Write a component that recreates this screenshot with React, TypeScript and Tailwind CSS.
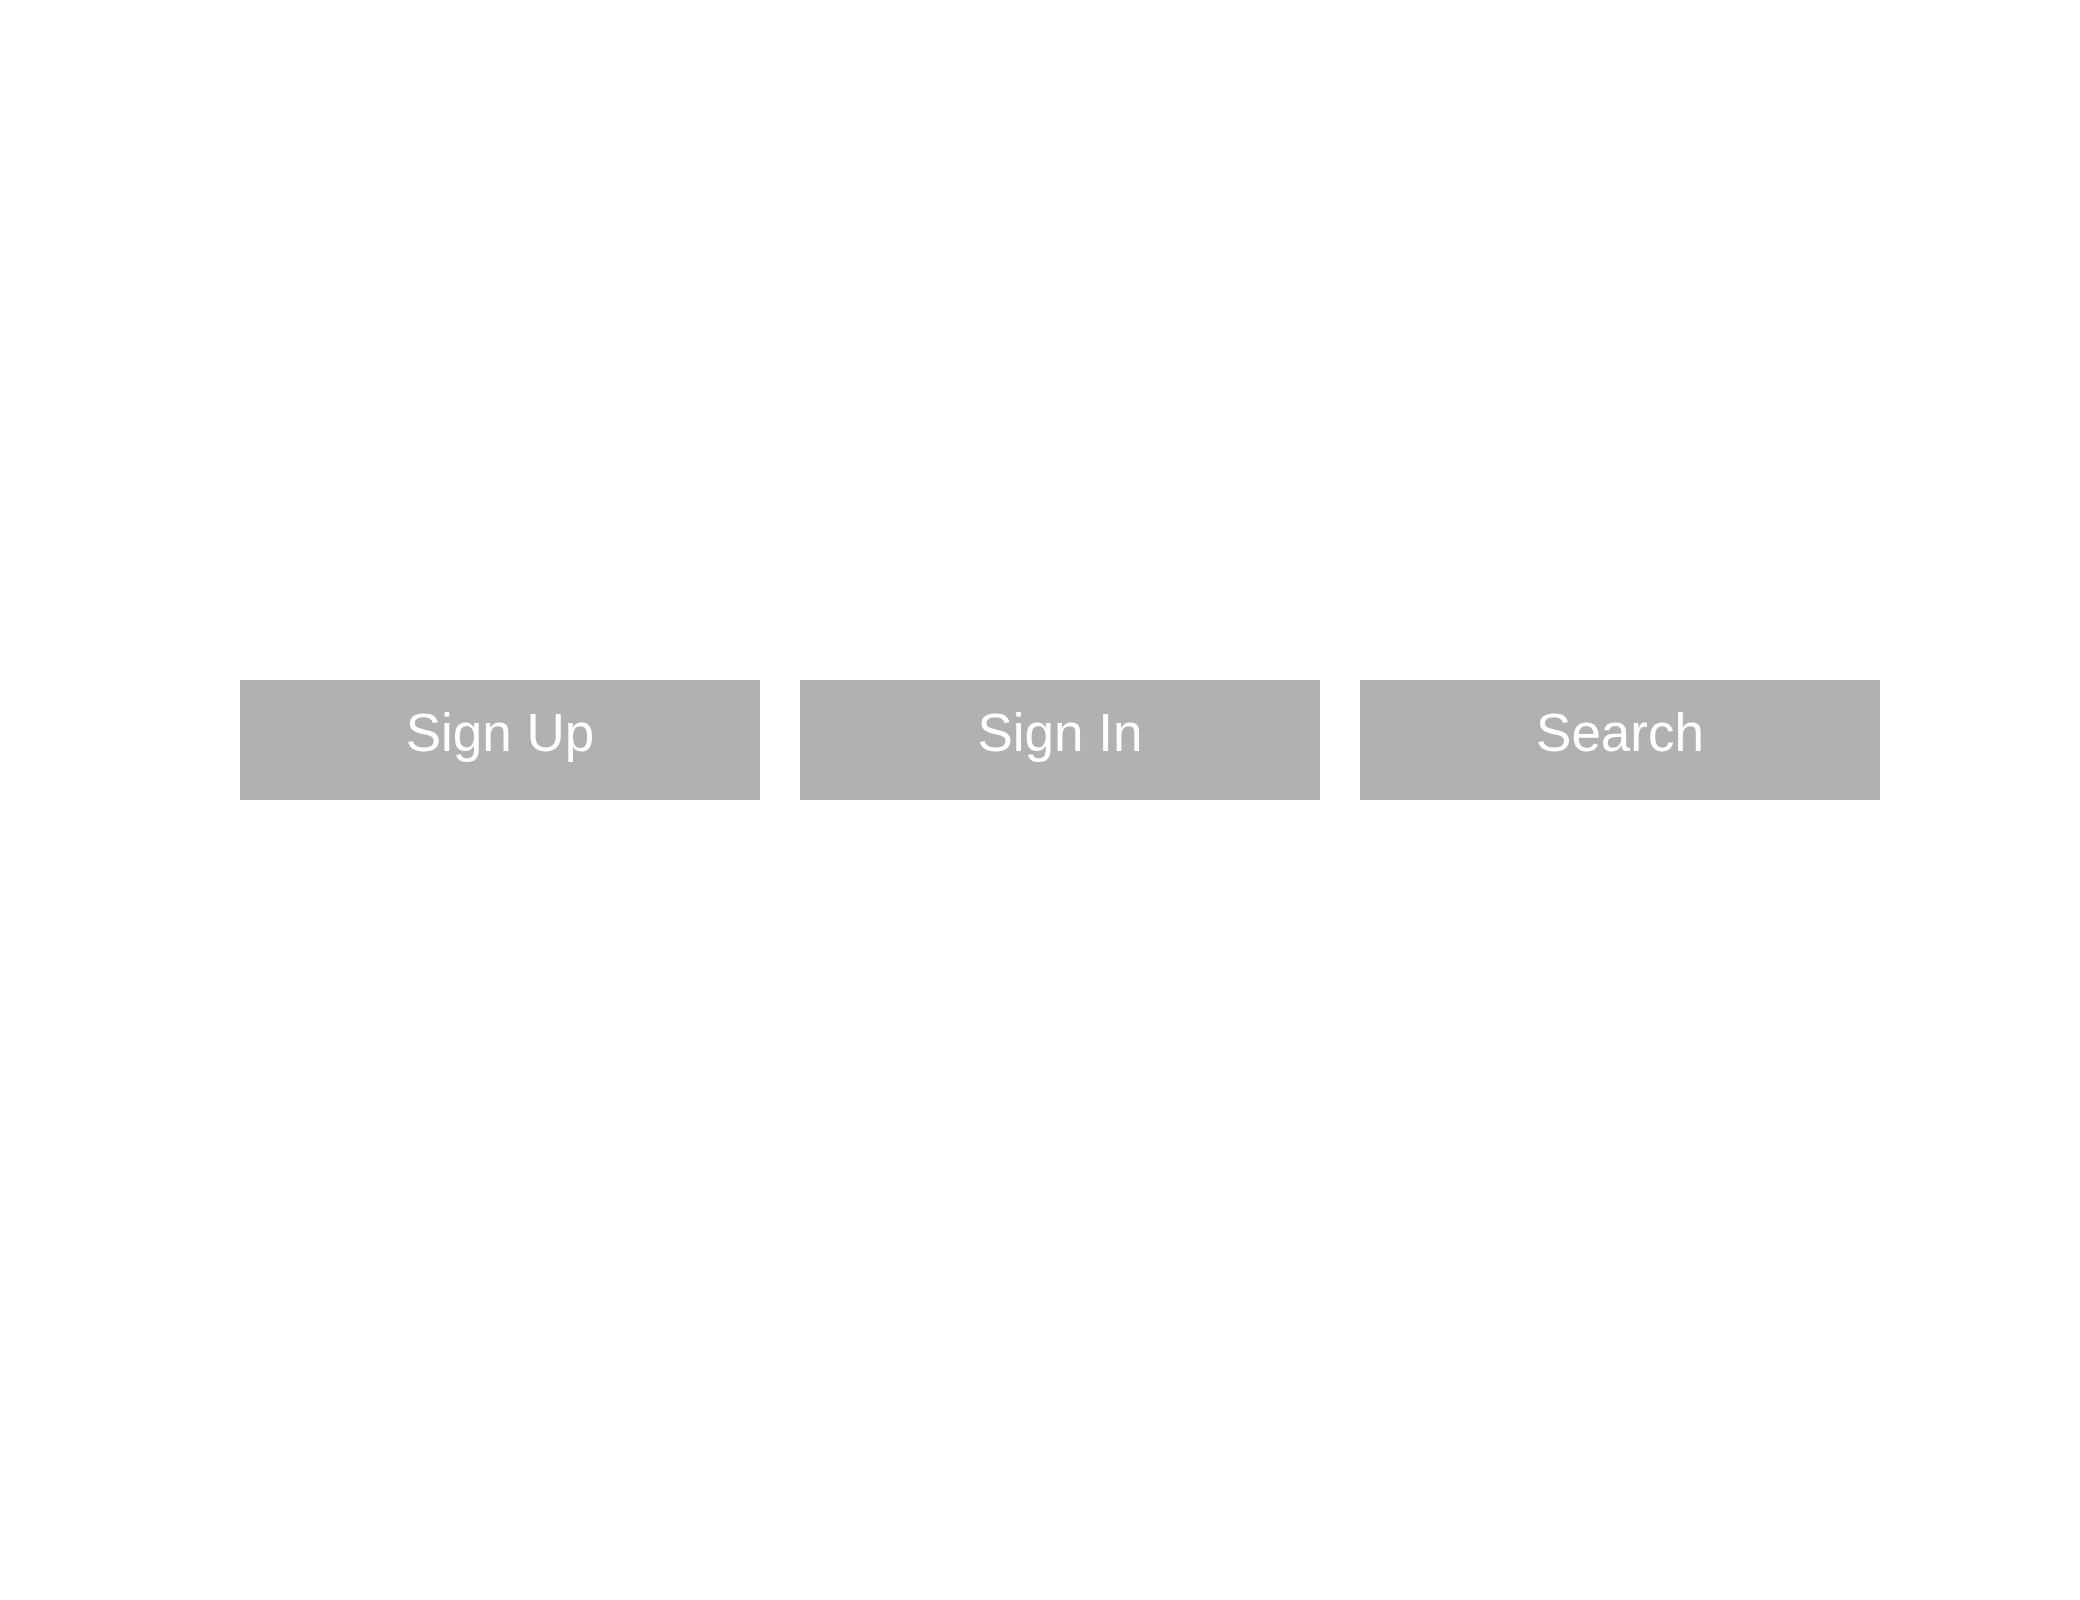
export default function App() {
  const buttons = ['Sign Up', 'Sign In', 'Search'];

  return (
    <div className="w-[2080px] h-[1600px] bg-white pl-[240px] pt-[680px] font-['Liberation_Sans',Arial,sans-serif]">
      <div className="flex gap-[40px]">
        {buttons.map((label) => (
          <button
            key={label}
            className="w-[520px] h-[120px] bg-[#b1b1b1] text-white text-[53px] leading-[61px] pt-[22px] flex justify-center items-start"
          >
            {label}
          </button>
        ))}
      </div>
    </div>
  );
}
